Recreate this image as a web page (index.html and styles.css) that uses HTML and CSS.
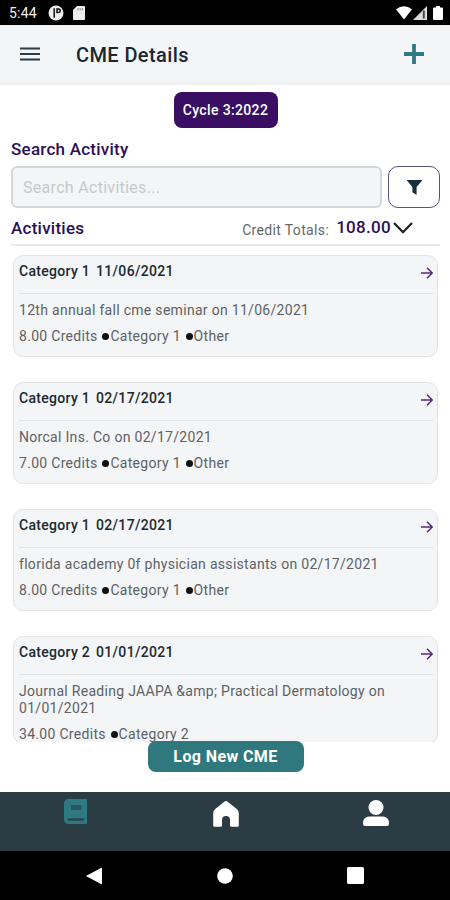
FILE: index.html
```html
<!DOCTYPE html>
<html lang="en">
<head>
  <meta charset="UTF-8" />
  <title>CME Details</title>
  <link rel="stylesheet" href="styles.css">
</head>
<body>

<div class="status-bar">
  <span class="time">5:44</span>
  <svg class="status-app" width="16" height="16" viewBox="0 0 16 16">
    <circle cx="8" cy="8" r="7.5" fill="#eee"/>
    <path d="M6.2 3.2v9.6M9 8.2V4h1.6a1.6 1.6 0 0 1 0 3.400H9" fill="none" stroke="#000" stroke-width="1.4"/>
  </svg>
  <svg class="status-card" width="12" height="14" viewBox="0 0 12 14">
    <path d="M4 0h7a1 1 0 0 1 1 1v12a1 1 0 0 1-1 1H1a1 1 0 0 1-1-1V4z" fill="#eee"/>
    <path d="M5 2v2.5M7.2 2v2.5M9.4 2v2.5" stroke="#888" stroke-width="1"/>
  </svg>
  <div class="status-right">
    <svg width="16" height="14" viewBox="0 0 16 14"><path d="M0 3.2Q8-2.6 16 3.2L8 13.5z" fill="#fff"/></svg>
    <svg width="14" height="14" viewBox="0 0 14 14"><path d="M14 0v14H0z" fill="#ddd"/><path d="M10.800 4.500V12.500" stroke="#444" stroke-width="2"/></svg>
    <svg class="battery" width="10" height="14" viewBox="0 0 10 14"><path d="M3 0h4v1.600h2a1 1 0 0 1 1 1V13a1 1 0 0 1-1 1H1a1 1 0 0 1-1-1V2.600a1 1 0 0 1 1-1h2z" fill="#fff"/></svg>
  </div>
</div>

<header>
  <svg width="20" height="14" viewBox="0 0 20 14"><path d="M0 1.500h20M0 7h20M0 12.500h20" stroke="#2c3a47" stroke-width="1.800"/></svg>
  <h1>CME Details</h1>
  <svg class="plus" width="20" height="20" viewBox="0 0 20 20"><path d="M10 0v20M0 10h20" stroke="#2d7a80" stroke-width="3.800"/></svg>
</header>

<main>
  <button class="btn cycle">Cycle 3:2022</button>

  <h2 class="search-title">Search Activity</h2>
  <div class="search-row">
    <input type="text" placeholder="Search Activities..." />
    <button class="filter">
      <svg width="15" height="15" viewBox="0 0 15 15"><path d="M.4 0h14.200a.4.4 0 0 1 .3.700L9.600 7v7.200a.5.5 0 0 1-.8.400L5.800 12.500a.8.8 0 0 1-.4-.7V7L.1.700A.4.4 0 0 1 .4 0z" fill="#15303b"/></svg>
    </button>
  </div>

  <div class="totals-row">
    <h2>Activities</h2>
    <span class="totals-label">Credit Totals:</span>
    <span class="totals-value">108.00</span>
    <svg class="chevron" width="20" height="12" viewBox="0 0 20 12"><path d="M1 1l9 9.200L19 1" fill="none" stroke="#222" stroke-width="2.300"/></svg>
  </div>

  <div class="list">
    <div class="card">
      <div class="card-head">
        <span>Category 1</span><span class="date">11/06/2021</span>
        <svg class="arrow" width="12" height="12" viewBox="0 0 12 12"><path d="M0 6h11M6 .8L11.200 6 6 11.200"/></svg>
      </div>
      <p>12th annual fall cme seminar on 11/06/2021</p>
      <p class="meta">8.00 Credits <i></i>Category 1 <i></i>Other</p>
    </div>
    <div class="card">
      <div class="card-head">
        <span>Category 1</span><span class="date">02/17/2021</span>
        <svg class="arrow" width="12" height="12" viewBox="0 0 12 12"><path d="M0 6h11M6 .8L11.200 6 6 11.200"/></svg>
      </div>
      <p>Norcal Ins. Co on 02/17/2021</p>
      <p class="meta">7.00 Credits <i></i>Category 1 <i></i>Other</p>
    </div>
    <div class="card">
      <div class="card-head">
        <span>Category 1</span><span class="date">02/17/2021</span>
        <svg class="arrow" width="12" height="12" viewBox="0 0 12 12"><path d="M0 6h11M6 .8L11.200 6 6 11.200"/></svg>
      </div>
      <p>florida academy 0f physician assistants on 02/17/2021</p>
      <p class="meta">8.00 Credits <i></i>Category 1 <i></i>Other</p>
    </div>
    <div class="card">
      <div class="card-head">
        <span>Category 2</span><span class="date">01/01/2021</span>
        <svg class="arrow" width="12" height="12" viewBox="0 0 12 12"><path d="M0 6h11M6 .8L11.200 6 6 11.200"/></svg>
      </div>
      <p>Journal Reading JAAPA &amp;amp; Practical Dermatology on 01/01/2021</p>
      <p class="meta">34.00 Credits <i></i>Category 2</p>
    </div>
  </div>

  <button class="btn log">Log New CME</button>
</main>

<nav class="tabs">
  <div>
    <svg width="23" height="25" viewBox="0 0 23 25"><path d="M4.500 0H22a1 1 0 0 1 1 1v23a1 1 0 0 1-1 1H4.500A4.500 4.500 0 0 1 0 20.500v-16A4.500 4.500 0 0 1 4.500 0z" fill="#2d7a80"/><path d="M7 8.500h10.500" stroke="#2b5661" stroke-width="5"/><path d="M5 20.500h14" stroke="#2b4650" stroke-width="2.600" stroke-linecap="round"/></svg>
  </div>
  <div class="home">
    <svg width="26" height="26" viewBox="0 0 26 26"><path d="M11 .9a3 3 0 0 1 4 0l8.500 6.900a6 6 0 0 1 2.300 4.800V24.400a1.400 1.400 0 0 1-1.400 1.400h-6a1.400 1.400 0 0 1-1.400-1.400V19a4 4 0 0 0-8 0v5.400a1.400 1.400 0 0 1-1.400 1.400h-6A1.400 1.400 0 0 1 .2 24.400V12.600a6 6 0 0 1 2.300-4.800z" fill="#fff"/></svg>
  </div>
  <div class="profile">
    <svg width="26" height="26" viewBox="0 0 26 26"><circle cx="13" cy="7.500" r="7.500" fill="#fff"/><path d="M6 16.500h14a6 6 0 0 1 6 6v1.500a2 2 0 0 1-2 2H2a2 2 0 0 1-2-2v-1.500a6 6 0 0 1 6-6z" fill="#fff"/></svg>
  </div>
</nav>

<div class="system-nav">
  <svg width="17" height="18" viewBox="0 0 17 18"><path d="M16 .5v17L.8 9.600a.7.7 0 0 1 0-1.200z" fill="#fff"/></svg>
  <svg width="16" height="16" viewBox="0 0 16 16"><circle cx="8" cy="8" r="7.800" fill="#fff"/></svg>
  <svg width="17" height="17" viewBox="0 0 17 17"><rect width="17" height="17" rx="1.500" fill="#fff"/></svg>
</div>

</body>
</html>
```
FILE: styles.css
```css
* {
  box-sizing: border-box;
}
body {
  font-family: Roboto, sans-serif;
  margin: 0;
  height: 900px;
  display: flex;
  flex-direction: column;
  background: #fff;
  overflow: hidden;
}
h1, h2, p {
  margin: 0;
}
svg {
  display: block;
  flex: none;
}
.status-bar {
  height: 25px;
  padding: 1px 7px 0 9px;
  display: flex;
  align-items: center;
  background: #000;
  color: #eee;
  font-size: 14px;
  letter-spacing: 0.2px;
}
.time {
  width: 39px;
}
.status-card {
  margin-left: 9px;
}
.status-right {
  margin-left: auto;
  display: flex;
  gap: 1px;
}
.battery {
  margin-left: 5px;
}
header {
  height: 60px;
  padding: 0 26px 0 20px;
  display: flex;
  align-items: center;
  background: #f3f5f7;
  border-bottom: 2px solid #eeeff0;
}
h1 {
  margin-left: 36px;
  padding-top: 1px;
  font-size: 20px;
  font-weight: 500;
  color: #1c272d;
  letter-spacing: 0.4px;
}
.plus {
  margin-left: auto;
}
main {
  height: 707px;
  padding: 7px 10px 0 11px;
  display: flex;
  flex-direction: column;
}
h2 {
  font-size: 17px;
  line-height: 20px;
  font-weight: 500;
  color: #2a0f57;
  letter-spacing: 0.25px;
}
.btn {
  border: none;
  padding: 0;
  color: #fff;
  font-family: inherit;
  font-weight: 500;
  align-self: center;
  flex: none;
}
.cycle {
  width: 104px;
  height: 36px;
  border-radius: 8px;
  background: #3a0f63;
  font-size: 14px;
  letter-spacing: 0.35px;
}
.search-title {
  margin-top: 11px;
}
.search-row {
  margin-top: 7px;
  display: flex;
  gap: 6px;
}
input {
  flex: 1;
  height: 42px;
  padding: 0 10px;
  border: 2px solid #d5d8da;
  border-radius: 6px;
  background: #f3f5f7;
  font-family: inherit;
  font-size: 16px;
  letter-spacing: 0.3px;
}
input::placeholder {
  color: #c6c9cb;
}
.filter {
  width: 52px;
  height: 42px;
  padding: 0;
  display: flex;
  align-items: center;
  justify-content: center;
  border: 1px solid #5b5280;
  border-radius: 10px;
  background: #fff;
}
.totals-row {
  height: 38px;
  padding: 3px 27px 0 0;
  display: flex;
  align-items: center;
  border-bottom: 2px solid #e9eaeb;
}
.totals-label {
  margin: 4px 7px 0 auto;
  font-size: 14px;
  color: #666;
  letter-spacing: 0.35px;
}
.totals-value {
  margin: 0 2px 2px 0;
  font-size: 17px;
  font-weight: 500;
  color: #2a0f57;
  letter-spacing: 0.3px;
}
.chevron {
  margin-top: 1px;
}
.list {
  height: 496px;
  padding: 9px 2px 0;
  overflow: hidden;
}
.card {
  min-height: 102px;
  margin-bottom: 25px;
  padding: 0 4px 0 5px;
  background: #f3f5f7;
  border: 1px solid #e1e3e5;
  border-radius: 10px;
}
.card-head {
  height: 38px;
  padding-bottom: 7px;
  display: flex;
  align-items: center;
  border-bottom: 1px solid #dfe1e3;
  font-size: 14px;
  font-weight: 500;
  color: #20282e;
  letter-spacing: 0.3px;
}
.date {
  margin-left: 6px;
}
.arrow {
  margin: 4px 0 0 auto;
  fill: none;
  stroke: #572a7c;
  stroke-width: 1.5;
}
.card p {
  margin-top: 8px;
  font-size: 14px;
  line-height: 17px;
  color: #5d6266;
  letter-spacing: 0.3px;
}
.card p.meta {
  margin-top: 9px;
}
.meta i {
  display: inline-block;
  width: 7px;
  height: 7px;
  margin: 0 1px;
  vertical-align: 1px;
  border-radius: 50%;
  background: #111;
}
.log {
  width: 156px;
  height: 31px;
  margin-top: -1px;
  border-radius: 8px;
  background: #2f797e;
  font-size: 16px;
  font-weight: 700;
  letter-spacing: 0.4px;
  z-index: 1;
}
.tabs {
  height: 59px;
  padding-top: 7px;
  display: grid;
  grid-template-columns: repeat(3, 150px);
  justify-items: center;
  background: #2c3c44;
}
.home {
  padding: 2px 0 0 2px;
}
.profile {
  padding: 1px 0 0 1px;
}
.system-nav {
  height: 49px;
  display: flex;
  align-items: center;
  justify-content: space-between;
  padding: 0 86px;
  background: #000;
}
```
